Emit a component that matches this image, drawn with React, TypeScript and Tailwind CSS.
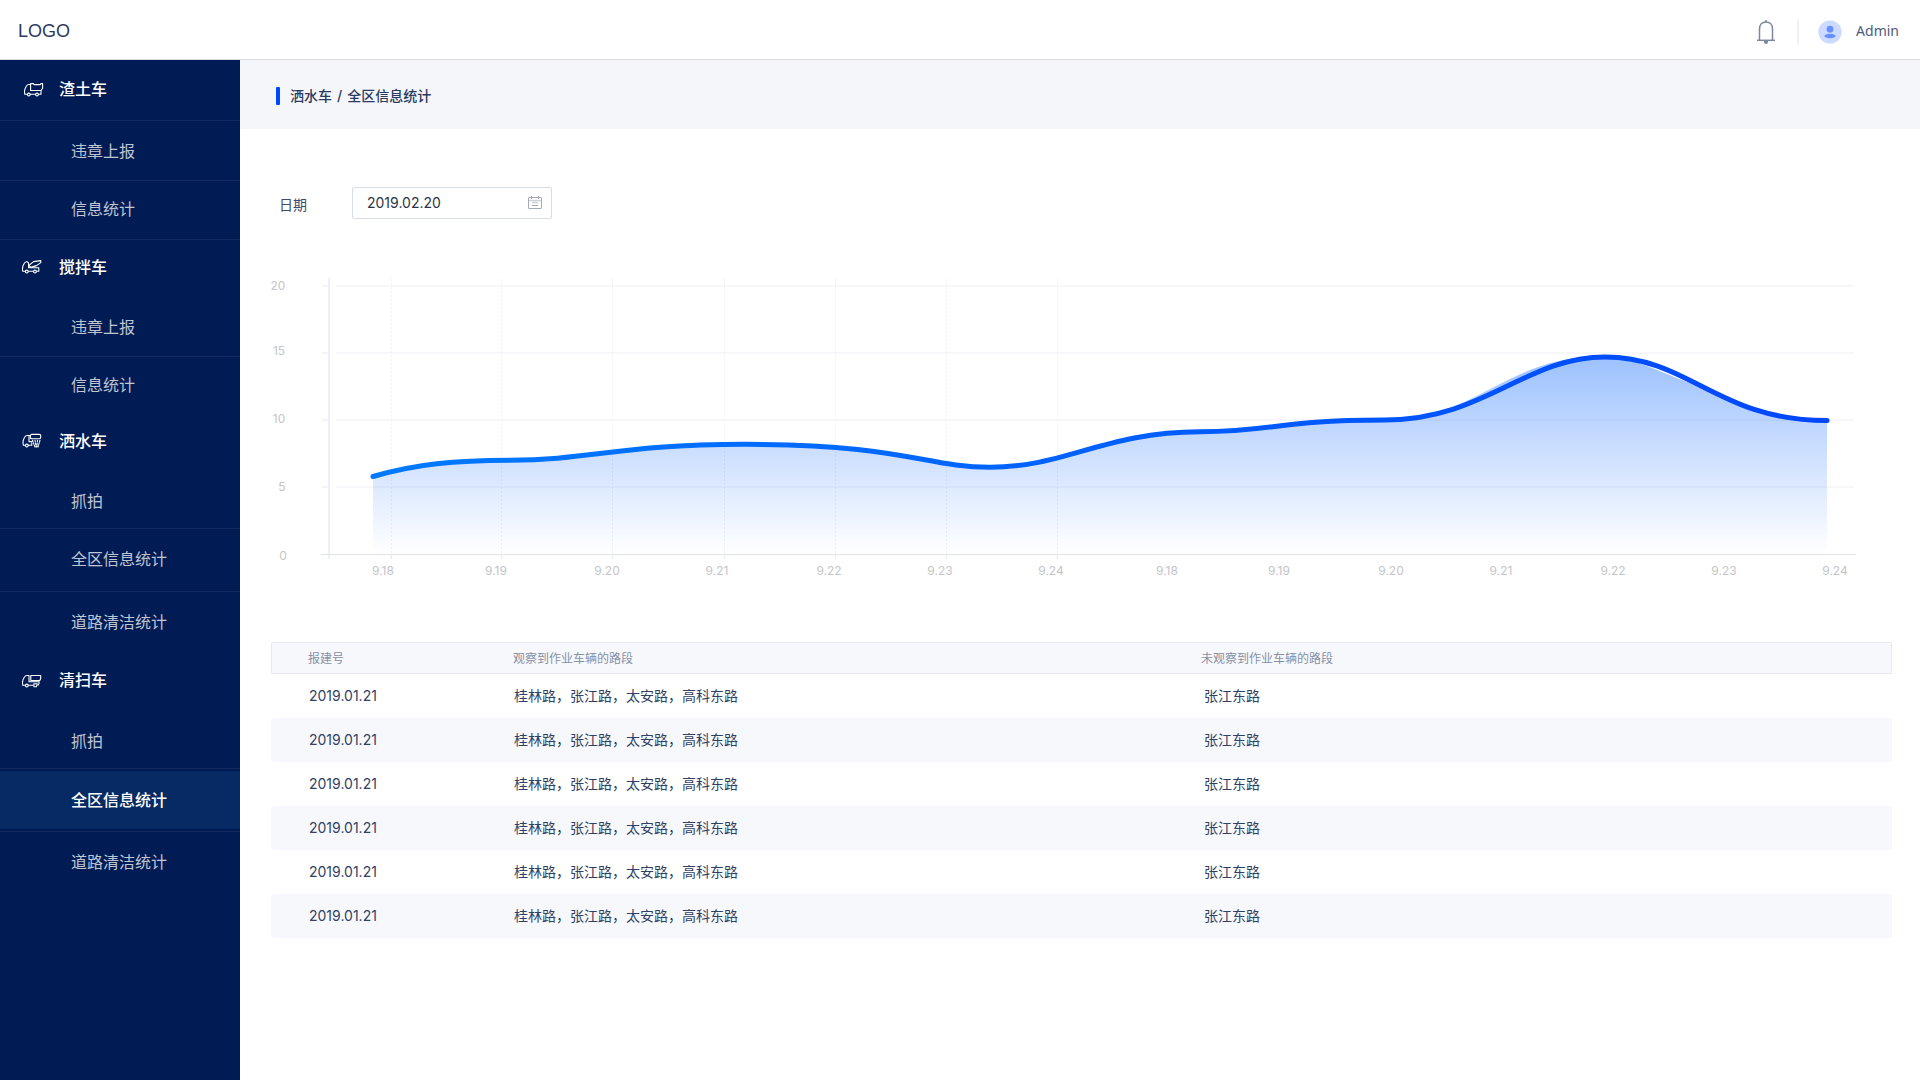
import React from "react";

type IconKind = "dump" | "mixer" | "sprinkler" | "sweeper";

type Item = { label: string; row: string; active?: boolean };
type Group = { title: string; icon: IconKind; row: string; indent: string; items: Item[] };

const groups: Group[] = [
  {
    title: "渣土车",
    icon: "dump",
    row: "h-[61px] border-b pb-0.5",
    indent: "pl-6",
    items: [
      { label: "违章上报", row: "h-[60px] border-b" },
      { label: "信息统计", row: "h-[59px] border-b pb-0.5" },
    ],
  },
  {
    title: "搅拌车",
    icon: "mixer",
    row: "h-[57px] pb-1",
    indent: "pl-[22px]",
    items: [
      { label: "违章上报", row: "h-[60px] border-b" },
      { label: "信息统计", row: "h-14" },
    ],
  },
  {
    title: "洒水车",
    icon: "sprinkler",
    row: "h-[57px] pb-0.5",
    indent: "pl-[22px]",
    items: [
      { label: "抓拍", row: "h-[59px] border-b pt-1" },
      { label: "全区信息统计", row: "h-[63px] border-b pb-0.5" },
      { label: "道路清洁统计", row: "h-[60px]" },
    ],
  },
  {
    title: "清扫车",
    icon: "sweeper",
    row: "h-[58px] pb-0.5",
    indent: "pl-[22px]",
    items: [
      { label: "抓拍", row: "h-[59px] border-b pt-1" },
      { label: "全区信息统计", row: "h-[63px] border-b py-0.5", active: true },
      { label: "道路清洁统计", row: "h-[60px]" },
    ],
  },
];

function TruckIcon({ kind }: { kind: IconKind }) {
  return (
    <svg
      viewBox="0 0 20 15"
      className="h-[15px] w-5 shrink-0"
      fill="none"
      stroke="currentColor"
      strokeWidth="1.1"
      strokeLinejoin="round"
      strokeLinecap="round"
      aria-hidden="true"
    >
      {kind === "dump" && (
        <>
          <path d="M3 12.300H.8C.2 10 .6 6.700 2.300 4.200 3 3 3.800 2.500 5 2.500H6.600V8.500H17V12.300H14.800M6.500 12.300H11.200" />
          <path d="M6.600 1.600H9.400L10.200 2.600H16.200L17 1.600H18.600V6.200L17 8.500" />
          <circle cx="4.800" cy="12.500" r="1.400" />
          <circle cx="13" cy="12.500" r="1.400" />
        </>
      )}
      {kind === "mixer" && (
        <>
          <path d="M3 12.300H.8C.2 10 .6 6.700 2.300 4.200 3 3 3.800 2.500 5.400 2.800L6.600 4.200V8.800H16.800V12.300H14.800M6.500 12.300H11.200" />
          <path d="M7 6.400 11.500 2.600 18.800 1.600V3.600L14.500 6.600 8.600 8.400Z" />
          <circle cx="4.800" cy="12.500" r="1.400" />
          <circle cx="13" cy="12.500" r="1.400" />
        </>
      )}
      {kind === "sprinkler" && (
        <>
          <path d="M3 12.300H1.400C.8 10 1 6.700 2.600 4.200 3.300 3 4 2.500 5.200 2.500H8.200M7 3V8.600H10M6.500 12.300H9.800V10" />
          <path d="M8.400 5.400V2.800C8.400 2 8.900 1.400 9.600 1.400H17.400C18.200 1.400 18.700 2 18.700 2.800V4.600C18.700 5.300 18.200 5.800 17.400 5.800H10Z" />
          <path d="M10.500 7.200 13 14M13 7.200 14.200 14M15.500 7.200 14.800 14M18 7.200 16 14" strokeDasharray="1.600 1.200" />
          <circle cx="4.800" cy="12.500" r="1.400" />
        </>
      )}
      {kind === "sweeper" && (
        <>
          <path d="M3 12.300H.8C.2 10 .6 6.700 2.300 4.200 3 3 3.800 2.500 5 2.500H7V8.800H17V10.500L16 12.300M6.500 12.300H11.200" />
          <path d="M8.800 2.500H18.700V5.600L17.800 7.600H8.800Z" />
          <circle cx="4.800" cy="12.500" r="1.400" />
          <path d="M11.800 10.800H15.200L14.400 13.800H12Z" />
        </>
      )}
    </svg>
  );
}

function Sidebar() {
  return (
    <nav className="w-60 shrink-0 bg-[#011c54] text-base text-white">
      {groups.map((g) => (
        <section key={g.title}>
          <h2 className={`flex items-center border-[#11295f] font-medium ${g.row}`}>
            <span className={`flex w-[59px] shrink-0 ${g.indent}`}>
              <TruckIcon kind={g.icon} />
            </span>
            {g.title}
          </h2>
          <ul>
            {g.items.map((it) => (
              <li key={it.label} className={`border-[#11295f] ${it.row}`}>
                <a
                  href="#"
                  className={`flex h-full items-center pl-[71px] ${
                    it.active ? "bg-[#062a64] font-medium text-white" : "text-white/75"
                  }`}
                >
                  {it.label}
                </a>
              </li>
            ))}
          </ul>
        </section>
      ))}
    </nav>
  );
}

function TopBar() {
  return (
    <header className="flex h-[60px] items-center justify-between border-b border-[#d8dbe6] bg-white pr-[21px] pl-[18px]">
      <div className="pt-0.5 font-['Liberation_Sans',sans-serif] text-lg text-[#2b3a5e]">LOGO</div>
      <div className="flex items-center pt-1">
        <button aria-label="通知" className="flex text-[#7b879d]">
          <svg viewBox="0 0 18 24" className="h-6 w-[18px]" fill="none" stroke="currentColor" strokeWidth="1.500">
            <path d="M2.500 20V9C2.500 4.800 5.200 1.900 9 1.900S15.500 4.800 15.500 9V20" />
            <path d="M0 20.300H18" />
            <path d="M9 0V2" />
            <path d="M7 20.600H11V22A2 2 0 0 1 7 22Z" fill="currentColor" stroke="none" />
          </svg>
        </button>
        <span className="ml-[22px] h-6 w-0.5 bg-[#eff0f6]" />
        <button className="ml-[19px] flex items-center gap-3.5 font-['Noto_Sans',sans-serif] text-sm text-[#4d5b7a]">
          <svg viewBox="0 0 24 24" className="size-6" aria-hidden="true">
            <circle cx="12" cy="12" r="11.600" fill="#ccdaff" />
            <circle cx="12" cy="9.200" r="3.400" fill="#6690ff" />
            <ellipse cx="12" cy="16" rx="5.600" ry="2.200" fill="#6690ff" />
          </svg>
          <span className="pb-0.5">Admin</span>
        </button>
      </div>
    </header>
  );
}

const yTicks = [
  { v: "20", y: 286, x: 278, base: 290 },
  { v: "15", y: 353, x: 279, base: 355 },
  { v: "10", y: 420, x: 279, base: 423 },
  { v: "5", y: 487, x: 282, base: 491 },
  { v: "0", y: 554, x: 283, base: 560 },
];

const xLabels: [string, number][] = [
  ["9.18", 383],
  ["9.19", 496],
  ["9.20", 607],
  ["9.21", 717],
  ["9.22", 829],
  ["9.23", 940],
  ["9.24", 1051],
  ["9.18", 1167],
  ["9.19", 1279],
  ["9.20", 1391],
  ["9.21", 1501],
  ["9.22", 1613],
  ["9.23", 1724],
  ["9.24", 1835],
];

const guides = [391, 501, 612, 724, 835, 946, 1057];

const curveHead =
  "M373 476.500C415 464 455 460.300 510 460.200C590 460.200 620 444.300 745 444.300C905 444.300 925 467.300 990 467.300C1065 467.300 1105 431.800 1200 431.800C1275 431.800 1275 420 1385 420";

function Chart() {
  return (
    <svg viewBox="271 259 1621 335" className="mt-10 block w-full" role="img" aria-label="全区信息统计">
      <defs>
        <linearGradient id="line" x1="0" x2="1" y1="0" y2="0">
          <stop offset="0" stopColor="#007aff" />
          <stop offset="1" stopColor="#0046fa" />
        </linearGradient>
        <linearGradient id="area" x1="0" x2="0" y1="0" y2="1">
          <stop offset="0" stopColor="#0060ff" stopOpacity="0.39" />
          <stop offset="1" stopColor="#0060ff" stopOpacity="0" />
        </linearGradient>
      </defs>
      {yTicks.slice(0, 4).map((t) => (
        <g key={t.v}>
          <path d={`M336 ${t.y}H1854`} stroke="#f5f5f7" strokeWidth="1.500" />
          <path d={`M322 ${t.y}H329`} stroke="#e9eaf0" />
        </g>
      ))}
      {guides.map((x) => (
        <g key={x}>
          <path d={`M${x + 0.5} 279V554`} stroke="#f0f1f4" strokeDasharray="2 2" />
          <path d={`M${x + 0.5} 554V559`} stroke="#e6e8ee" />
        </g>
      ))}
      <path d="M329 278V559" stroke="#eeeff4" strokeWidth="2" />
      <path
        d={`${curveHead}C1478 420 1504 356 1605 356C1632 357 1655 370 1690 383C1725 401 1757 420.500 1827 420.500V554H373Z`}
        fill="url(#area)"
      />
      <path d="M321 554.500H1856" stroke="#e1e3ea" />
      <path
        d={`${curveHead}C1485 420 1525 357 1605 357C1690 357 1717 420.500 1827 420.500`}
        fill="none"
        stroke="url(#line)"
        strokeWidth="5"
        strokeLinecap="round"
      />
      <g className="text-xs" fill="#c4c5c8" textAnchor="middle">
        {yTicks.map((t) => (
          <text key={t.v} x={t.x} y={t.base}>
            {t.v}
          </text>
        ))}
        {xLabels.map(([label, x]) => (
          <text key={x} x={x} y="575">
            {label}
          </text>
        ))}
      </g>
    </svg>
  );
}

const rows = Array.from({ length: 6 }, (_, id) => ({
  id,
  date: "2019.01.21",
  seen: "桂林路，张江路，太安路，高科东路",
  unseen: "张江东路",
}));

function RoadTable() {
  return (
    <table className="mt-12 w-full table-fixed border-separate border-spacing-0 text-left">
      <colgroup>
        <col className="w-[205px]" />
        <col className="w-[688px]" />
        <col />
      </colgroup>
      <thead>
        <tr className="h-8 text-xs text-[#8790a5] *:border-y *:border-[#e6e9f0] *:bg-[#f7f8fc] *:pt-0.5 *:font-normal">
          <th className="rounded-l-xs border-l pl-9">报建号</th>
          <th className="pl-[37px]">观察到作业车辆的路段</th>
          <th className="rounded-r-xs border-r pl-[37px]">未观察到作业车辆的路段</th>
        </tr>
      </thead>
      <tbody className="text-sm text-[#303f63]">
        {rows.map((r) => (
          <tr key={r.id} className="h-11 even:*:bg-[#f7f8fc]">
            <td className="rounded-l-xs pl-[38px]">{r.date}</td>
            <td className="pl-[38px]">{r.seen}</td>
            <td className="rounded-r-xs pl-10">{r.unseen}</td>
          </tr>
        ))}
      </tbody>
    </table>
  );
}

export default function App() {
  return (
    <div className="flex min-h-screen flex-col bg-white font-['Inter','Noto_Sans_CJK_SC',sans-serif]">
      <TopBar />
      <div className="flex flex-1">
        <Sidebar />
        <main className="min-w-0 flex-1">
          <div className="flex h-[69px] items-center gap-2.5 bg-[#f4f6fa] pt-0.5 pl-9">
            <span className="h-[18px] w-1 rounded-[1px] bg-[#0048ff]" />
            <h1 className="flex gap-[5px] text-sm font-medium text-[#2b3a5e]">
              <span>洒水车</span>
              <span>/</span>
              <span>全区信息统计</span>
            </h1>
          </div>
          <div className="pt-[58px] pr-7 pl-[31px]">
            <div className="flex items-center pl-2">
              <label htmlFor="date" className="w-[73px] pt-1 text-sm text-[#3d4a6b]">
                日期
              </label>
              <div className="flex h-8 w-[200px] items-center rounded-xs border border-[#d8dbe8] pr-[9px] pl-3.5">
                <input
                  id="date"
                  defaultValue="2019.02.20"
                  className="min-w-0 flex-1 bg-transparent text-sm text-[#2c3346] outline-none"
                />
                <svg viewBox="0 0 14 13" className="mb-0.5 h-[13px] w-3.5" fill="none" stroke="#a3a9ba" aria-hidden="true">
                  <rect x="0.500" y="1.500" width="13" height="11" rx="0.500" />
                  <path d="M3.500 0V3M10.500 0V3M4 9.500H10" />
                  <path d="M1 4.500H13M4 6.500H10" stroke="#cfd2dc" strokeWidth="1.500" />
                </svg>
              </div>
            </div>
            <Chart />
            <RoadTable />
          </div>
        </main>
      </div>
    </div>
  );
}
